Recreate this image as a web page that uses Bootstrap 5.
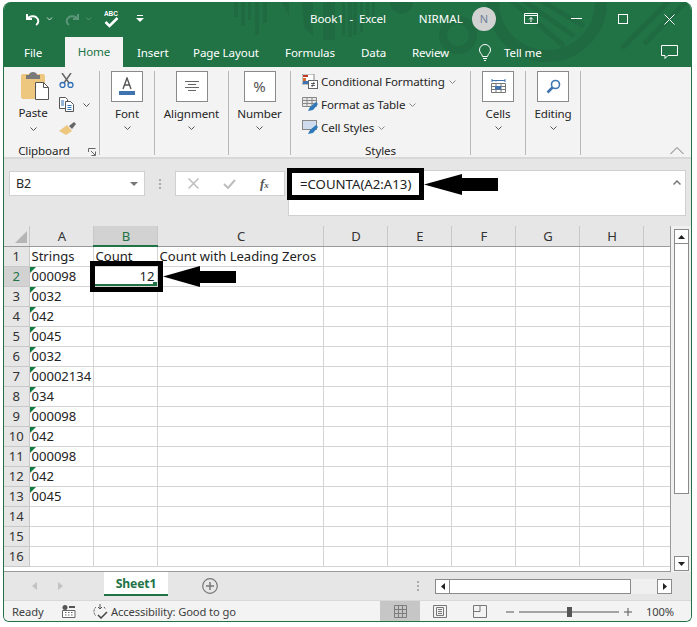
<!DOCTYPE html>
<html lang="en"><head><meta charset="utf-8"><title>Book1 - Excel</title>
<link href="https://cdn.jsdelivr.net/npm/bootstrap@5.3.0/dist/css/bootstrap.min.css" rel="stylesheet">
<style>
html,body{background:#fff;margin:0;overflow:hidden}
body{font-family:"Noto Sans","Open Sans",sans-serif;font-size:11.6px;letter-spacing:-.12px;color:#262626;width:697px;height:627px}
.xw{position:relative;margin:2px 0 0 3px;width:689px;height:620px;background:#e6e6e6;border:1px solid #217346;border-top:0;border-radius:8px 8px 6px 6px;overflow:hidden}
.head{position:relative;background:#217346;height:65px;color:#fff}
.deco{position:absolute;left:0;top:0}
.tbar{position:relative;height:34px}
.tabs{position:relative;height:31px;padding-top:1px}
.tabs>span{display:block;line-height:29px}
.t1{margin-left:20px;width:41px}
.thome{width:58px;background:#f3f3f3;color:#217346;text-align:center;height:31px}
.t2{margin-left:14px;width:56px}.t3{width:92px}.t4{width:76px}.t5{width:51px}.t6{width:66px}
.t7{margin-right:12px}.t8{width:157px}
.qa0{margin-left:22px}
.qc1{margin:0}
.ttl{margin-left:166px}
.usr{margin-left:33px;letter-spacing:0}
.avatar{margin-left:9px;width:24px;height:24px;border-radius:50%;background:#d2d2d2;color:#6d7f99;text-align:center;line-height:24px;font-size:11px}
.w1{margin-left:28px}.w2{margin-left:33px}.w3{margin-left:36px}.w4{margin:0 16px 0 36px}
.rib{height:92px;background:#f3f3f3;border-bottom:2px solid #d8d8d8;position:relative}
.grp{height:84px;margin-top:4px;border-right:1px solid #b8b8b8;position:relative;line-height:15px}
.g0{width:96px}.g1{width:55px}.g2{width:74px}.g3{width:62px}.g4{width:180px}.g5{width:55px}.g6{width:55px}
.ibox{width:32px;height:31px;background:#fff;border:1px solid #8a8a8a;margin-bottom:4px}
.chev{display:block;margin-top:5px}
.glabel{margin-top:auto;margin-bottom:-4px;height:15px;line-height:14px;color:#262626}
.pastecol{width:48px;margin-left:7px}
.pl{margin:4px 4px 0 0}
.pastecol .chev{margin:7px 4px 0 0}
.cbcol{width:36px;margin-top:2px}
.cb2{margin-top:9px}.cb3{margin-top:9px}
.lab0{width:100%;text-align:center;padding-right:15px;position:absolute;bottom:0}
.launch{position:absolute;right:3px;bottom:-1px}
.g4rows{margin-top:-1px}
.srow{height:23px;padding-left:11px;line-height:23px}
.srow svg:first-child{margin-right:3px}
.pctg{font-size:15px;color:#555}
.collapse-up{position:absolute;left:666px;top:80px}
.fbar{height:67px;background:#e6e6e6;position:relative}
.nbox{margin:12px 0 0 5px;width:136px;height:25px;background:#fff;border:1px solid #d0d0d0;padding:0 6px;font-size:12.5px;line-height:23px}
.dots{width:30px;margin-top:12px}
.fxbox{margin-top:12px;width:110px;height:25px;background:#fff;border:1px solid #d0d0d0}
.fx1{margin-left:12px}.fx2{margin-left:24px}.fx3{margin-left:24px;color:#555;font-family:"Liberation Serif",serif;font-size:13px;font-weight:700}
.fxx{font-size:9px}
.finput{margin:11px 0 0 3px;width:398px;height:46px;background:#fff;border:1px solid #d0d0d0;padding:1px 0 0 11px;line-height:25px;font-size:13.2px;letter-spacing:0;position:relative;color:#222}
.fup{position:absolute;right:4px;top:9px}
.gridrow{height:346px}
.gridwrap{width:667px;height:346px;overflow:hidden;background:#fff;border-right:1px solid #9a9a9a;border-bottom:1px solid #9a9a9a}
.sheet{table-layout:fixed;border-collapse:collapse;width:666px;font-size:13.05px;letter-spacing:0;color:#222}
.sheet th,.sheet td{height:20px;padding:0 2px;border:1px solid #d4d4d4;line-height:18px;white-space:nowrap;overflow:visible;position:relative;font-weight:400}
.sheet thead th{background:#e6e6e6;border-color:#c8c8c8;border-width:0 1px 1px 0;border-bottom-color:#9a9a9a;text-align:center;color:#333;padding:0 1px 0 3px}
.sheet tbody th{background:#e6e6e6;border-color:#c8c8c8;text-align:center;padding:0;color:#333;border-left:0}
.sheet th.sel{background:#d2d2d2;color:#217346}
.sheet thead th.sel{border-bottom:2px solid #217346}
.sheet .flag::before{content:"";position:absolute;left:0;top:0;border-top:6px solid #107c41;border-right:6px solid transparent}
.sheet td.num{text-align:right;box-shadow:inset 0 -2px #217346}
.sheet td.num::after{content:"";position:absolute;right:0;bottom:0;width:4px;height:4px;background:#217346}
.c0{width:25px}.c6{width:64px}.c16{width:166px}.cx{width:27px}
.ccorner{position:absolute;left:11px;top:5px}
.vbar{width:20px;background:#f0f0f0;padding:3px 2px 1px 3px;height:346px}
.sbtn{width:15px;height:15px;background:#fff;border:1px solid #8a8a8a;display:flex;align-items:center;justify-content:center;flex:none}
.vthumb{width:15px;height:251px;background:#fff;border:1px solid #8a8a8a;margin-top:-1px}
.tabbar{height:28px;background:#e6e6e6;position:relative}
.navarrows{width:100px;padding-left:28px;gap:21px}
.sheettab{width:64px;height:24px;background:#fff;color:#217346;font-weight:700;text-align:center;border-bottom:2px solid #217346;line-height:23px;font-size:12.2px}
.plus{margin-left:34px}
.tdots{margin-left:199px}
.hbar{margin-left:16px;width:237px;height:15px;background:#f0f0f0}
.hthumb{width:182px;height:15px;background:#fff;border:1px solid #8a8a8a;margin-left:-1px}
.hgap{flex:1}
.status{height:22px;background:#f3f3f3;border-top:1px solid #d8d8d8;font-size:11.2px;line-height:21px;color:#404040}
.s1{margin-left:8px;width:50px}
.s2{margin-right:16px}.s3{margin-right:3px}
.s4{margin-left:auto}
.vw{width:40px;height:21px;display:flex;align-items:center;justify-content:center}
.vw.on{background:#c6c6c6}
.zoomer{margin-left:6px}
.zpct{width:40px;margin:0 11px 0 7px;text-align:center;color:#404040}
.redbox{position:absolute;border:5px solid #000;background:transparent}
.rb1{left:287px;top:168px;width:137px;height:32px}
.rb2{left:90px;top:261px;width:73px;height:31px}
.arrow{position:absolute}
.a1{left:424px;top:174px}
.a2{left:163px;top:266px}
</style></head><body>
<div class="xw">
 <div class="head">
  <svg class="deco" width="689" height="65"><g fill="#1f6a41"><rect x="230" y="0" width="4" height="15"/><rect x="237" y="0" width="4" height="24"/><rect x="244" y="0" width="3" height="18"/><rect x="251" y="0" width="4" height="33"/><rect x="259" y="0" width="4" height="21"/><path d="M278 0h7v14z"/><path d="M298 0h11v34l-9-9z"/><rect x="319" y="0" width="12" height="38"/><path d="M338 0h3v34h-3zM344 0h4v35h-4zM349 0h4v33h-4zM356 0h3v30h-3zM362 0h3v22h-3zM368 0h3v14h-3z"/><path d="M386 0h23a11.500 11.500 0 0 1-23 0z"/></g><g fill="none" stroke="#1f6a41"><circle cx="454" cy="33" r="15" stroke-width="8"/><circle cx="543" cy="0" r="54" stroke-width="12"/><path d="M500 -8 560 44M510 -8 570 34M522 -10 580 24" stroke-width="5"/><path d="M618 46 668 -4M640 42 686 -4" stroke-width="5"/></g></svg>
  <div class="tbar d-flex align-items-center">
   <svg class="qa0" width="14" height="13" viewBox="0 0 14 13"><path d="M1 1v5h5M1.500 5.500C4 3 8 2.500 10.500 4.500 13.500 7 12.500 10.500 10 12" fill="none" stroke="#fff" stroke-width="2"/></svg>
   <svg class="qc1" width="25" height="6" viewBox="0 0 25 6"><path d="M7 1.500l2.500 2.500 2.500-2.500" fill="none" stroke="#d4e3da"/></svg>
   <svg width="14" height="13" viewBox="0 0 14 13"><path d="M13 1v5H8M12.500 5.500C10 3 6 2.500 3.500 4.500.5 7 1.500 10.500 4 12" fill="none" stroke="#5b957a" stroke-width="2"/></svg>
   <svg width="24" height="6" viewBox="0 0 24 6"><path d="M7 1.500l2.500 2.500 2.500-2.500" fill="none" stroke="#5b957a"/></svg>
   <svg width="17" height="20" viewBox="0 0 17 20"><text x="1" y="7" font-size="6.500" font-weight="700" fill="#fff" font-family="Liberation Sans">ABC</text><path d="M2.500 13l4 4 8-8" fill="none" stroke="#fff" stroke-width="2.500"/></svg>
   <svg class="ms-3" width="8" height="8" viewBox="0 0 8 8"><path d="M0 3h8L4 7z" fill="#fff"/><path d="M1 .5h6" stroke="#fff"/></svg>
   <span class="ttl">Book1 &nbsp;- &nbsp;Excel</span>
   <span class="usr">NIRMAL</span>
   <span class="avatar">N</span>
   <svg class="w1" width="14" height="12" viewBox="0 0 14 12"><path d="M.5 .5h13v10H.5zM.5 2.500h13M7 9V4.500M5 6.500l2-2 2 2" fill="none" stroke="#fff"/></svg>
   <svg class="w2" width="11" height="2"><rect width="11" height="1" fill="#fff"/></svg>
   <svg class="w3" width="10" height="10"><rect x=".5" y=".5" width="9" height="9" fill="none" stroke="#fff"/></svg>
   <svg class="w4" width="11" height="11" viewBox="0 0 11 11"><path d="M.5 .5l10 10M10.500 .5l-10 10" stroke="#fff"/></svg>
  </div>
  <div class="tabs d-flex align-items-center">
   <span class="t1">File</span><span class="thome">Home</span><span class="t2">Insert</span><span class="t3">Page Layout</span><span class="t4">Formulas</span><span class="t5">Data</span><span class="t6">Review</span>
   <svg class="t7" width="14" height="17" viewBox="0 0 14 17"><path d="M4.500 12.500C4 9.500 1.500 9 1.500 6a5.500 5.500 0 0 1 11 0c0 3-2.500 3.500-3 6.500zM5 14.500h4M6 16.500h2" fill="none" stroke="#fff"/></svg>
   <span class="t8">Tell me</span>
   <svg width="17" height="15" viewBox="0 0 17 15"><path d="M.5 .5h16v10H7l-3 3v-3H.5z" fill="none" stroke="#fff"/></svg>
  </div>
 </div>
 <div class="rib d-flex">
  <div class="grp g0 d-flex flex-wrap align-content-start">
   <div class="pastecol d-flex flex-column align-items-center">
    <svg width="29" height="30" viewBox="0 0 29 30"><rect x="0" y="3" width="24" height="25" rx="2" fill="#eec77f"/><path d="M8 4c0-2 2-3 4-3s4 1 4 3h3v4H5V4z" fill="#7a7a7a"/><path d="M14.500 11.500h8l5 5v12h-13z" fill="#fff" stroke="#555"/><path d="M22.500 11.500v5h5" fill="none" stroke="#555"/></svg>
    <span class="pl">Paste</span>
    <svg class="chev" width="7" height="4"><path d="M.5 .5l3 3 3-3" fill="none" stroke="#555"/></svg>
   </div>
   <div class="cbcol d-flex flex-column">
    <svg width="15" height="15" viewBox="0 0 15 15"><path d="M3 0l7 10M12 0L5 10" stroke="#666" stroke-width="1.500"/><circle cx="3.500" cy="12" r="2.500" fill="none" stroke="#2f6fb5" stroke-width="1.300"/><circle cx="11.500" cy="12" r="2.500" fill="none" stroke="#2f6fb5" stroke-width="1.300"/></svg>
    <div class="d-flex align-items-center cb2"><svg width="16" height="15" viewBox="0 0 16 15"><path d="M.5 .5h6l2 2v9h-8z" fill="#fff" stroke="#555"/><path d="M6.500 4.500h5l3 3v7h-8z" fill="#fff" stroke="#555"/><path d="M2 4h3M2 6h3M2 8h3M8.500 8.500h4M8.500 10.500h4M8.500 12.500h4" stroke="#2f6fb5"/></svg><svg class="ms-2" width="7" height="4"><path d="M.5 .5l3 3 3-3" fill="none" stroke="#555"/></svg></div>
    <svg class="cb3" width="17" height="15" viewBox="0 0 17 15"><path d="M10 5l5-4 2 2-4 5z" fill="#666"/><path d="M0 10l8-6 5 6-6 4z" fill="#eec77f"/></svg>
   </div>
   <span class="glabel lab0">Clipboard</span>
   <svg class="launch" width="8" height="8" viewBox="0 0 8 8"><path d="M.5 4V.5H7.500M3 3l4 4M7.500 3.500v4h-4" fill="none" stroke="#666"/></svg>
  </div>
  <div class="grp g1 d-flex flex-column align-items-center">
   <div class="ibox d-flex align-items-center justify-content-center"><svg width="16" height="19" viewBox="0 0 16 19"><path d="M4 12L8 1l4 11M5.500 8h5" fill="none" stroke="#555" stroke-width="1.400"/><rect y="14" width="16" height="4" fill="#3f74b0"/></svg></div>
   <span>Font</span><svg class="chev" width="7" height="4"><path d="M.5 .5l3 3 3-3" fill="none" stroke="#555"/></svg>
  </div>
  <div class="grp g2 d-flex flex-column align-items-center">
   <div class="ibox d-flex align-items-center justify-content-center"><svg width="14" height="11" viewBox="0 0 14 11"><path d="M0 .5h14M3 3.500h8M0 6.500h14M3 9.500h8" stroke="#666"/></svg></div>
   <span>Alignment</span><svg class="chev" width="7" height="4"><path d="M.5 .5l3 3 3-3" fill="none" stroke="#555"/></svg>
  </div>
  <div class="grp g3 d-flex flex-column align-items-center">
   <div class="ibox d-flex align-items-center justify-content-center pctg">%</div>
   <span>Number</span><svg class="chev" width="7" height="4"><path d="M.5 .5l3 3 3-3" fill="none" stroke="#555"/></svg>
  </div>
  <div class="grp g4 d-flex flex-column">
   <div class="g4rows">
   <div class="srow d-flex align-items-center"><svg width="16" height="15" viewBox="0 0 16 15"><rect width="12" height="10" fill="#fff" stroke="#888"/><rect x="1" y="1" width="5" height="2" fill="#c0392b"/><rect x="1" y="4" width="3" height="3" fill="#e06b2d"/><rect x="1" y="7" width="5" height="3" fill="#3f74b0"/><rect x="6.500" y="6.500" width="9" height="8" fill="#fff" stroke="#666"/><path d="M9 9.500h4M9 11.500h4M12 8l-2 5" stroke="#444" stroke-width=".8"/></svg><span>Conditional Formatting</span><svg class="ms-1" width="7" height="4"><path d="M.5 .5l3 3 3-3" fill="none" stroke="#888"/></svg></div>
   <div class="srow d-flex align-items-center"><svg width="16" height="15" viewBox="0 0 16 15"><path d="M.5 .5h14v9h-14zM.5 3.500h14M5 .5v9M10 .5v9M.5 6.500h14" fill="#e9e9e9" stroke="#888"/><path d="M6 14l2-4 6-5 2 2-5 6z" fill="#2f78b9"/></svg><span>Format as Table</span><svg class="ms-1" width="7" height="4"><path d="M.5 .5l3 3 3-3" fill="none" stroke="#888"/></svg></div>
   <div class="srow d-flex align-items-center"><svg width="16" height="15" viewBox="0 0 16 15"><rect x=".5" y=".5" width="14" height="9" fill="#cfdced" stroke="#888"/><path d="M6 14l2-4 6-5 2 2-5 6z" fill="#2f78b9"/></svg><span>Cell Styles</span><svg class="ms-1" width="7" height="4"><path d="M.5 .5l3 3 3-3" fill="none" stroke="#888"/></svg></div>
   </div>
   <span class="glabel text-center">Styles</span>
  </div>
  <div class="grp g5 d-flex flex-column align-items-center">
   <div class="ibox d-flex align-items-center justify-content-center"><svg width="15" height="16" viewBox="0 0 15 16"><path d="M1 1.500h13M1 0v3M14 0v3M5 1.500v1" stroke="#3f74b0"/><path d="M.5 4.500h14v9H.5zM.5 7.500h14M.5 10.500h14M5 4.500v9M10 4.500v9" fill="#fff" stroke="#777"/><rect x="4" y="7" width="6" height="3.500" fill="#3f74b0"/></svg></div>
   <span>Cells</span><svg class="chev" width="7" height="4"><path d="M.5 .5l3 3 3-3" fill="none" stroke="#555"/></svg>
  </div>
  <div class="grp g6 d-flex flex-column align-items-center">
   <div class="ibox d-flex align-items-center justify-content-center"><svg width="15" height="15" viewBox="0 0 15 15"><circle cx="9.500" cy="5.500" r="4" fill="none" stroke="#3f74b0" stroke-width="1.600"/><path d="M6.500 8.500L1.500 13.500" stroke="#3f74b0" stroke-width="2.600"/></svg></div>
   <span>Editing</span><svg class="chev" width="7" height="4"><path d="M.5 .5l3 3 3-3" fill="none" stroke="#555"/></svg>
  </div>
  <svg class="collapse-up" width="14" height="8"><path d="M.5 7l6.500-6.500L13.500 7" fill="none" stroke="#777"/></svg>
 </div>
 <div class="fbar d-flex align-items-start">
  <div class="nbox d-flex justify-content-between align-items-center"><span>B2</span><svg width="8" height="4"><path d="M0 0h8L4 4z" fill="#777"/></svg></div>
  <div class="dots d-flex justify-content-center pt-2"><svg width="2" height="10"><path d="M0 0h2v2H0zM0 4h2v2H0zM0 8h2v2H0z" fill="#aaa"/></svg></div>
  <div class="fxbox d-flex align-items-center">
   <svg class="fx1" width="11" height="11"><path d="M.5 .5l10 10M10.500 .5l-10 10" stroke="#bdbdbd" stroke-width="1.500"/></svg>
   <svg class="fx2" width="13" height="10"><path d="M1 5l4 4 7-8" fill="none" stroke="#bdbdbd" stroke-width="2"/></svg>
   <span class="fx3"><i>f</i><i class="fxx">x</i></span>
  </div>
  <div class="finput">=COUNTA(A2:A13)<svg class="fup" width="8" height="5"><path d="M.5 4.500L4 1l3.500 3.500" fill="none" stroke="#777" stroke-width="1.500"/></svg></div>
 </div>
 <div class="gridrow d-flex">
  <div class="gridwrap">
   <table class="sheet"><colgroup><col class="c0"><col class="c6"><col class="c6"><col class="c16"><col class="c6"><col class="c6"><col class="c6"><col class="c6"><col class="c6"><col class="cx"></colgroup>
   <thead><tr><th><svg class="ccorner" width="12" height="12"><path d="M12 0v12H0z" fill="#b5b5b5"/></svg></th><th>A</th><th class="sel">B</th><th>C</th><th>D</th><th>E</th><th>F</th><th>G</th><th>H</th><th></th></tr></thead>
   <tbody>
   <tr><th>1</th><td>Strings</td><td>Count</td><td>Count with Leading Zeros</td><td></td><td></td><td></td><td></td><td></td><td></td></tr>
   <tr><th class="sel">2</th><td class="flag">000098</td><td class="num">12</td><td></td><td></td><td></td><td></td><td></td><td></td><td></td></tr>
   <tr><th>3</th><td class="flag">0032</td><td></td><td></td><td></td><td></td><td></td><td></td><td></td><td></td></tr>
   <tr><th>4</th><td class="flag">042</td><td></td><td></td><td></td><td></td><td></td><td></td><td></td><td></td></tr>
   <tr><th>5</th><td class="flag">0045</td><td></td><td></td><td></td><td></td><td></td><td></td><td></td><td></td></tr>
   <tr><th>6</th><td class="flag">0032</td><td></td><td></td><td></td><td></td><td></td><td></td><td></td><td></td></tr>
   <tr><th>7</th><td class="flag">00002134</td><td></td><td></td><td></td><td></td><td></td><td></td><td></td><td></td></tr>
   <tr><th>8</th><td class="flag">034</td><td></td><td></td><td></td><td></td><td></td><td></td><td></td><td></td></tr>
   <tr><th>9</th><td class="flag">000098</td><td></td><td></td><td></td><td></td><td></td><td></td><td></td><td></td></tr>
   <tr><th>10</th><td class="flag">042</td><td></td><td></td><td></td><td></td><td></td><td></td><td></td><td></td></tr>
   <tr><th>11</th><td class="flag">000098</td><td></td><td></td><td></td><td></td><td></td><td></td><td></td><td></td></tr>
   <tr><th>12</th><td class="flag">042</td><td></td><td></td><td></td><td></td><td></td><td></td><td></td><td></td></tr>
   <tr><th>13</th><td class="flag">0045</td><td></td><td></td><td></td><td></td><td></td><td></td><td></td><td></td></tr>
   <tr><th>14</th><td></td><td></td><td></td><td></td><td></td><td></td><td></td><td></td><td></td></tr>
   <tr><th>15</th><td></td><td></td><td></td><td></td><td></td><td></td><td></td><td></td><td></td></tr>
   <tr><th>16</th><td></td><td></td><td></td><td></td><td></td><td></td><td></td><td></td><td></td></tr>
   </tbody></table>
  </div>
  <div class="vbar d-flex flex-column">
   <div class="sbtn"><svg width="7" height="4"><path d="M3.500 0L7 4H0z" fill="#222"/></svg></div>
   <div class="vthumb"></div>
   <div class="sbtn mt-auto"><svg width="7" height="4"><path d="M0 0h7L3.500 4z" fill="#222"/></svg></div>
  </div>
 </div>
 <div class="tabbar d-flex align-items-center">
  <div class="navarrows d-flex align-items-center"><svg width="5" height="8"><path d="M5 0v8L0 4z" fill="#c2c2c2"/></svg><svg width="5" height="8"><path d="M0 0v8l5-4z" fill="#c2c2c2"/></svg></div>
  <div class="sheettab align-self-start">Sheet1</div>
  <svg class="plus" width="16" height="16" viewBox="0 0 16 16"><circle cx="8" cy="8" r="7.300" fill="none" stroke="#777" stroke-width="1.200"/><path d="M8 4v8M4 8h8" stroke="#777" stroke-width="1.500"/></svg>
  <svg class="tdots" width="2" height="10"><path d="M0 0h2v2H0zM0 4h2v2H0zM0 8h2v2H0z" fill="#aaa"/></svg>
  <div class="hbar d-flex">
   <div class="sbtn"><svg width="4" height="7"><path d="M4 0v7L0 3.500z" fill="#222"/></svg></div>
   <div class="hthumb"></div><div class="hgap"></div>
   <div class="sbtn"><svg width="4" height="7"><path d="M0 0v7l4-3.500z" fill="#222"/></svg></div>
  </div>
 </div>
 <div class="status d-flex align-items-center">
  <span class="s1">Ready</span>
  <svg class="s2" width="14" height="13" viewBox="0 0 14 13"><circle cx="3" cy="2.500" r="2.500" fill="#555"/><path d="M7 1h6v2H7z" fill="#555"/><path d="M.5 5.500h12.500v7H.5z" fill="#fff" stroke="#666"/><path d="M3 7.500h1.500M6 7.500h1.500M9 7.500h1.500M3 10h1.500M6 10h1.500M9 10h1.500" stroke="#666"/></svg>
  <svg class="s3" width="16" height="15" viewBox="0 0 16 15"><path d="M4 3a6 6 0 0 0 0 9M12 3l1.500 2" fill="none" stroke="#555" stroke-dasharray="2 1"/><path d="M8 0v5M6 3l2 2 2-2" fill="none" stroke="#555"/><path d="M6 11l3 3 6-6" fill="none" stroke="#444" stroke-width="1.500"/></svg>
  <span>Accessibility: Good to go</span>
  <div class="vw on s4"><svg width="13" height="13" viewBox="0 0 13 13"><path d="M.5 .5h12v12H.5zM.5 4.500h12M.5 8.500h12M4.500 .5v12M8.500 .5v12" fill="none" stroke="#7c7c7c"/></svg></div>
  <div class="vw"><svg width="14" height="13" viewBox="0 0 14 13"><path d="M.5 .5h13v12H.5z" fill="none" stroke="#777"/><path d="M3.500 2.500h7v8h-7zM5 4.500h4M5 6.500h4M5 8.500h4" fill="none" stroke="#777"/></svg></div>
  <div class="vw"><svg width="14" height="13" viewBox="0 0 14 13"><path d="M.5 .5h13v12H.5zM.5 6.500h6.500V.5" fill="none" stroke="#777"/></svg></div>
  <svg class="zoomer" width="127" height="12" viewBox="0 0 127 12"><path d="M0 6h8M13 6h100M118 6h8M122 2v8" stroke="#555"/><rect x="61" y="1" width="5" height="10" fill="#555"/></svg>
  <span class="zpct">100%</span>
 </div>
</div>
<div class="redbox rb1"></div><div class="redbox rb2"></div>
<svg class="arrow a1" width="74" height="21"><path d="M0 10.500L38 0v4h36v13H38v4z" fill="#000"/></svg>
<svg class="arrow a2" width="73" height="21"><path d="M0 10.500L37 0v5h36v12H37v4z" fill="#000"/></svg>
</body></html>
